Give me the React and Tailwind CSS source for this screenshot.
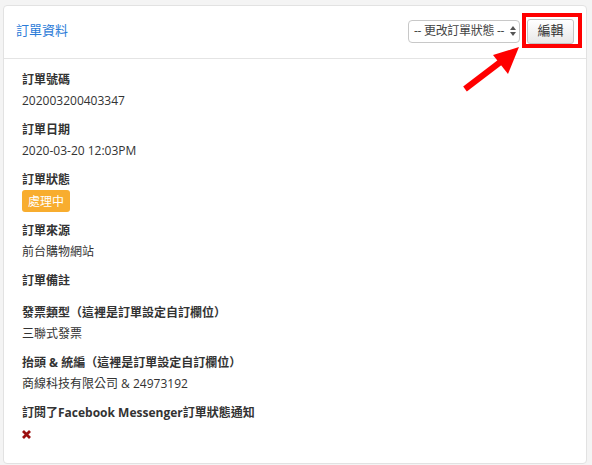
import React from "react";

const FONT = {
  fontFamily: '"Open Sans", "Noto Sans CJK TC", sans-serif',
};

// Single label/value pair in the order detail panel
function Field({ label, children }) {
  return (
    <div className="mb-2">
      <div className="h-[21px] leading-[21px] font-bold text-[12px] text-[#333]">
        {label}
      </div>
      <div className="min-h-[3px] leading-[21px] text-[12px] text-[#333]">
        {children}
      </div>
    </div>
  );
}

function StatusSelect() {
  return (
    <div className="flex h-[23px] w-[112px] items-center justify-between rounded-[4px] border border-[#c8c8c8] bg-white pl-[5px] pr-[3px] text-[12px] text-[#444]">
      <span className="whitespace-nowrap tracking-[-0.3px]">-- 更改訂單狀態 --</span>
      <svg width="6" height="10" viewBox="0 0 6 10" className="shrink-0">
        <path d="M3 0 L6 4 L0 4 Z" fill="#555" />
        <path d="M3 10 L6 6 L0 6 Z" fill="#555" />
      </svg>
    </div>
  );
}

export default function App() {
  return (
    <div
      className="relative min-h-[465px] bg-[#f4f4f4] pl-[3px] pr-[5px] pt-[5px]"
      style={FONT}
    >
      <div className="h-[459px] rounded-[4px] border border-[#e2e2e2] bg-white">
        {/* Panel header */}
        <div className="flex h-[53px] items-center justify-between border-b border-[#e4e4e4] px-3 pb-[2px]">
          <h2 className="text-[13px] text-[#2b7bd8]">訂單資料</h2>
          <div className="flex items-center gap-[7px]">
            <StatusSelect />
            <button className="h-[25px] w-[47px] rounded-[3px] border border-[#c4c4c4] bg-gradient-to-b from-white to-[#e8e8e8] text-[13px] text-[#333]">
              編輯
            </button>
          </div>
        </div>

        {/* Panel body */}
        <div className="pl-[18px] pt-[10px]">
          <Field label="訂單號碼">202003200403347</Field>
          <Field label="訂單日期">2020-03-20 12:03PM</Field>
          <Field label="訂單狀態">
            <span className="mb-[-1px] inline-flex h-[22px] items-center rounded-[3px] bg-[#f8ad2f] px-[6px] text-[12px] text-white">
              處理中
            </span>
          </Field>
          <Field label="訂單來源">前台購物網站</Field>
          <Field label="訂單備註" />
          <Field label="發票類型（這裡是訂單設定自訂欄位）">三聯式發票</Field>
          <Field label="抬頭 & 統編（這裡是訂單設定自訂欄位）">
            商線科技有限公司 &amp; 24973192
          </Field>
          <Field label="訂閱了Facebook Messenger訂單狀態通知">
            <svg width="9" height="9" viewBox="0 0 9 9" className="mt-[7px]">
              <path
                d="M1 1 L8 8 M8 1 L1 8"
                stroke="#9b1010"
                strokeWidth="2.8"
              />
            </svg>
          </Field>
        </div>
      </div>

      {/* Red highlight box around the edit button */}
      <div className="absolute left-[522px] top-[13px] h-[35px] w-[60px] border-4 border-[#ff0000]" />

      {/* Red pointer arrow */}
      <svg
        className="absolute left-0 top-0"
        width="592"
        height="465"
        viewBox="0 0 592 465"
      >
        <line
          x1="465"
          y1="89"
          x2="503"
          y2="60"
          stroke="#ff0000"
          strokeWidth="6"
        />
        <polygon points="519,47 493,55 508,74" fill="#ff0000" />
      </svg>
    </div>
  );
}
